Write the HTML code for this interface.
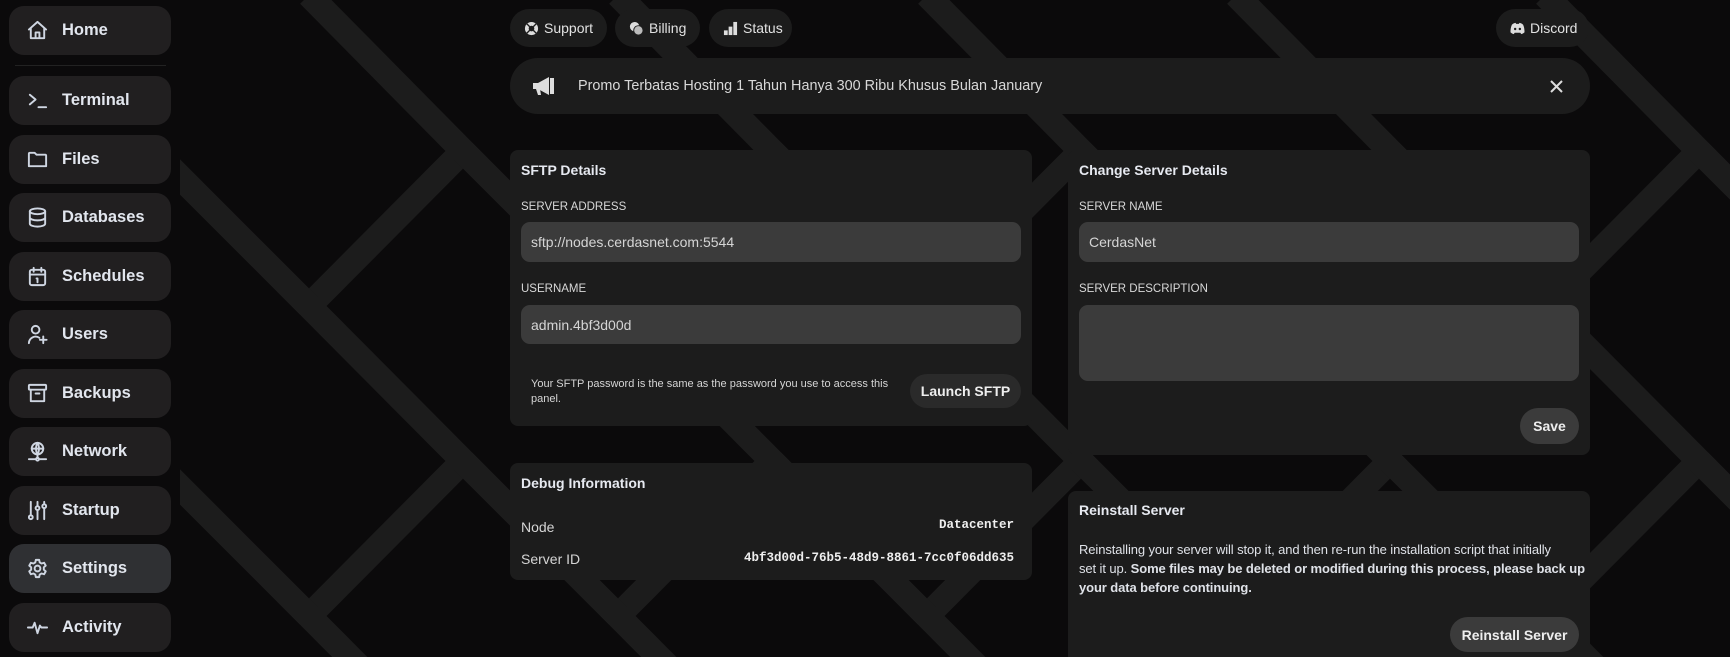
<!DOCTYPE html>
<html><head><meta charset="utf-8"><style>
*{box-sizing:border-box;margin:0;padding:0}
body{width:1730px;height:657px;background:#0b0a0b;position:relative;overflow:hidden;font-family:"Liberation Sans",sans-serif;color:#e5e7eb}
.a{position:absolute}
.side{left:0;top:0;width:180px;height:657px;background:#0b0a0b}
.nav{position:absolute;left:9px;width:162px;height:49px;border-radius:15px;background:#211f20;display:flex;align-items:center;font-size:16.5px;font-weight:bold;color:#e2e6ee}
.nav svg{position:absolute;left:17px;top:13px;width:23px;height:23px;fill:none;stroke:#cfd6e2;stroke-width:2;stroke-linecap:round;stroke-linejoin:round}
.nav span{position:absolute;left:53px}
.pill{position:absolute;top:9px;height:38px;border-radius:20px;background:#1c1c1c;display:flex;align-items:center;font-size:14px;color:#e2e2e2;padding-left:14px}
.pill svg{width:15px;height:15px;margin-right:5px}
.card{position:absolute;background:#1c1c1c;border-radius:8px}
.t{position:absolute;font-size:14px;font-weight:bold;color:#e6e9f0}
.lbl{position:absolute;font-size:11.5px;color:#d8d8d8}
.in{position:absolute;background:#3b3b3b;border-radius:9px;font-size:14px;color:#d5d5d5;padding-left:10px;display:flex;align-items:center}
.btn{position:absolute;background:#333;border-radius:18px;font-size:14px;font-weight:bold;color:#eee;display:flex;align-items:center;justify-content:center}
.mono{font-family:"Liberation Mono",monospace;font-weight:bold;font-size:12.5px;color:#eee}
</style></head><body>
<svg class="a" style="left:0;top:0" width="1730" height="657">
<g stroke="#1c1c1c" stroke-width="25" fill="none">
<polyline points="309,-5 463,151 309,306 463,461 309,616 463,771"/>
<polyline points="618,-5 772,151 618,306 772,461 618,616 772,771"/>
<polyline points="927,-5 1081,151 927,306 1081,461 927,616 1081,771"/>
<polyline points="1236,-5 1390,151 1236,306 1390,461 1236,616 1390,771"/>
<polyline points="1545,-5 1699,151 1545,306 1699,461 1545,616 1699,771"/>
<line x1="154" y1="151" x2="309" y2="306"/><line x1="154" y1="461" x2="309" y2="616"/>
<line x1="463" y1="151" x2="618" y2="306"/><line x1="463" y1="461" x2="618" y2="616"/>
<line x1="772" y1="151" x2="927" y2="306"/><line x1="772" y1="461" x2="927" y2="616"/>
<line x1="1081" y1="151" x2="1236" y2="306"/><line x1="1081" y1="461" x2="1236" y2="616"/>
<line x1="1390" y1="151" x2="1545" y2="306"/><line x1="1390" y1="461" x2="1545" y2="616"/>
<line x1="1699" y1="151" x2="1854" y2="306"/><line x1="1699" y1="461" x2="1854" y2="616"/>
</g></svg>
<div class="a side"></div>
<div class="a" style="left:15px;top:65px;width:151px;height:1px;background:#222"></div>

<div class="nav" style="top:6px"><svg viewBox="0 0 24 24"><path d="M3 11l9-8 9 8M5 9.5V20h14V9.5M10 20v-6h4v6"/></svg><span>Home</span></div>
<div class="nav" style="top:76px"><svg viewBox="0 0 24 24"><path d="M4 6l6 5-6 5M13 19h8"/></svg><span>Terminal</span></div>
<div class="nav" style="top:135px"><svg viewBox="0 0 24 24"><path d="M3 6a1 1 0 011-1h5l2 2h9a1 1 0 011 1v11H3z"/></svg><span>Files</span></div>
<div class="nav" style="top:193px"><svg viewBox="0 0 24 24"><ellipse cx="12" cy="5.5" rx="8" ry="3"/><path d="M4 5.5v13c0 1.7 3.6 3 8 3s8-1.3 8-3v-13M4 12c0 1.7 3.6 3 8 3s8-1.3 8-3"/></svg><span>Databases</span></div>
<div class="nav" style="top:252px"><svg viewBox="0 0 24 24"><rect x="4" y="5" width="16" height="16" rx="2"/><path d="M8 3v4M16 3v4M4 10h16M11 14h1v4"/></svg><span>Schedules</span></div>
<div class="nav" style="top:310px"><svg viewBox="0 0 24 24"><circle cx="10" cy="7" r="4"/><path d="M3 21a7 7 0 0111-5.5M18 14v7M14.5 17.5h7"/></svg><span>Users</span></div>
<div class="nav" style="top:369px"><svg viewBox="0 0 24 24"><rect x="3" y="3" width="18" height="5" rx="1"/><path d="M5 8v12h14V8M10 12h4"/></svg><span>Backups</span></div>
<div class="nav" style="top:427px"><svg viewBox="0 0 24 24"><circle cx="12" cy="9" r="6"/><path d="M6 9h12M12 3c-2 3-2 9 0 12M12 3c2 3 2 9 0 12M12 15v4M3 20h7M14 20h7"/><circle cx="12" cy="20" r="1.5"/></svg><span>Network</span></div>
<div class="nav" style="top:486px"><svg viewBox="0 0 24 24"><path d="M5 3v14M12 3v4M19 3v2M12 12v9M19 10v11"/><circle cx="5" cy="19" r="2"/><circle cx="12" cy="9.5" r="2"/><circle cx="19" cy="7.5" r="2"/></svg><span>Startup</span></div>
<div class="nav" style="top:544px;background:#2f3033"><svg viewBox="0 0 24 24"><path d="M10.3 3h3.4l.6 2.6 2 1.2 2.6-.8 1.7 3-2 1.8v2.4l2 1.8-1.7 3-2.6-.8-2 1.2-.6 2.6h-3.4l-.6-2.6-2-1.2-2.6.8-1.7-3 2-1.8v-2.4l-2-1.8 1.7-3 2.6.8 2-1.2z"/><circle cx="12" cy="12" r="3"/></svg><span>Settings</span></div>
<div class="nav" style="top:603px"><svg viewBox="0 0 24 24"><path d="M2 12h5l2-5 3 11 2.5-8 1.5 2h6"/></svg><span>Activity</span></div>

<div class="pill" style="left:510px;width:97px"><svg viewBox="0 0 16 16"><circle cx="8" cy="8" r="7" fill="#ddd"/><circle cx="8" cy="8" r="3" fill="#1c1c1c"/><path d="M3 3l3 3M13 3l-3 3M3 13l3-3M13 13l-3-3" stroke="#1c1c1c" stroke-width="1.5"/></svg>Support</div>
<div class="pill" style="left:615px;width:85px"><svg viewBox="0 0 16 16"><circle cx="6" cy="6" r="5" fill="#ddd"/><circle cx="10" cy="10" r="5" fill="#bbb" stroke="#1c1c1c"/></svg>Billing</div>
<div class="pill" style="left:709px;width:83px"><svg viewBox="0 0 16 16" fill="#ddd"><rect x="1" y="10" width="4" height="5"/><rect x="6" y="6" width="4" height="9"/><rect x="11" y="1" width="4" height="14"/></svg>Status</div>
<div class="pill" style="left:1496px;width:93px"><svg viewBox="0 0 16 16"><path d="M2 4c2-2 4-2 4-2l.5 1h3l.5-1s2 0 4 2c1 2 1.5 5 1.5 8-1.5 1.5-3.5 2-3.5 2l-1-1.5h-6L4 14s-2-.5-3.5-2c0-3 .5-6 1.5-8z" fill="#ddd"/><circle cx="5.5" cy="8.5" r="1.3" fill="#1c1c1c"/><circle cx="10.5" cy="8.5" r="1.3" fill="#1c1c1c"/></svg>Discord</div>

<div class="a" style="left:510px;top:58px;width:1080px;height:56px;border-radius:28px;background:#1c1c1c"></div>
<svg class="a" style="left:532px;top:76px" width="23" height="22" viewBox="0 0 23 22"><path d="M1 7h5l11-6v18L6 13H1z" fill="#ddd"/><rect x="18" y="2" width="4" height="16" fill="#ddd"/><path d="M4 13l2 6h3l-1-6z" fill="#ddd"/></svg>
<div class="a" style="left:578px;top:78px;font-size:14.4px;color:#d8d8d8">Promo Terbatas Hosting 1 Tahun Hanya 300 Ribu Khusus Bulan January</div>
<svg class="a" style="left:1550px;top:80px" width="13" height="13"><path d="M1 1l11 11M12 1L1 12" stroke="#ddd" stroke-width="2"/></svg>

<div class="card" style="left:510px;top:150px;width:522px;height:276px"></div>
<div class="t" style="left:521px;top:162px">SFTP Details</div>
<div class="lbl" style="left:521px;top:201px">SERVER ADDRESS</div>
<div class="in" style="left:521px;top:222px;width:500px;height:40px">sftp://nodes.cerdasnet.com:5544</div>
<div class="lbl" style="left:521px;top:283px">USERNAME</div>
<div class="in" style="left:521px;top:305px;width:500px;height:39px">admin.4bf3d00d</div>
<div class="a" style="left:531px;top:377px;width:365px;font-size:11px;line-height:15px;color:#d5d5d5">Your SFTP password is the same as the password you use to access this panel.</div>
<div class="btn" style="left:910px;top:374px;width:111px;height:34px;background:#2a2a2a">Launch SFTP</div>

<div class="card" style="left:510px;top:463px;width:522px;height:117px"></div>
<div class="t" style="left:521px;top:475px">Debug Information</div>
<div class="a" style="left:521px;top:519px;font-size:14px;color:#d5d5d5">Node</div>
<div class="a mono" style="right:716px;top:518px">Datacenter</div>
<div class="a" style="left:521px;top:551px;font-size:14px;color:#d5d5d5">Server ID</div>
<div class="a mono" style="right:716px;top:551px">4bf3d00d-76b5-48d9-8861-7cc0f06dd635</div>

<div class="card" style="left:1068px;top:150px;width:522px;height:305px"></div>
<div class="t" style="left:1079px;top:162px">Change Server Details</div>
<div class="lbl" style="left:1079px;top:201px">SERVER NAME</div>
<div class="in" style="left:1079px;top:222px;width:500px;height:40px">CerdasNet</div>
<div class="lbl" style="left:1079px;top:283px">SERVER DESCRIPTION</div>
<div class="in" style="left:1079px;top:305px;width:500px;height:76px"></div>
<div class="btn" style="left:1520px;top:408px;width:59px;height:36px;background:#3b3b3b">Save</div>

<div class="card" style="left:1068px;top:491px;width:522px;height:166px;border-radius:8px 8px 0 0"></div>
<div class="t" style="left:1079px;top:502px">Reinstall Server</div>
<div class="a" style="left:1079px;top:540px;white-space:nowrap;font-size:13px;line-height:19px;color:#dfe2e8;letter-spacing:-0.1px">Reinstalling your server will stop it, and then re-run the installation script that initially<br>set it up. <b>Some files may be deleted or modified during this process, please back up<br>your data before continuing.</b></div>
<div class="btn" style="left:1450px;top:617px;width:129px;height:35px;background:#3b3b3b">Reinstall Server</div>
</body></html>
